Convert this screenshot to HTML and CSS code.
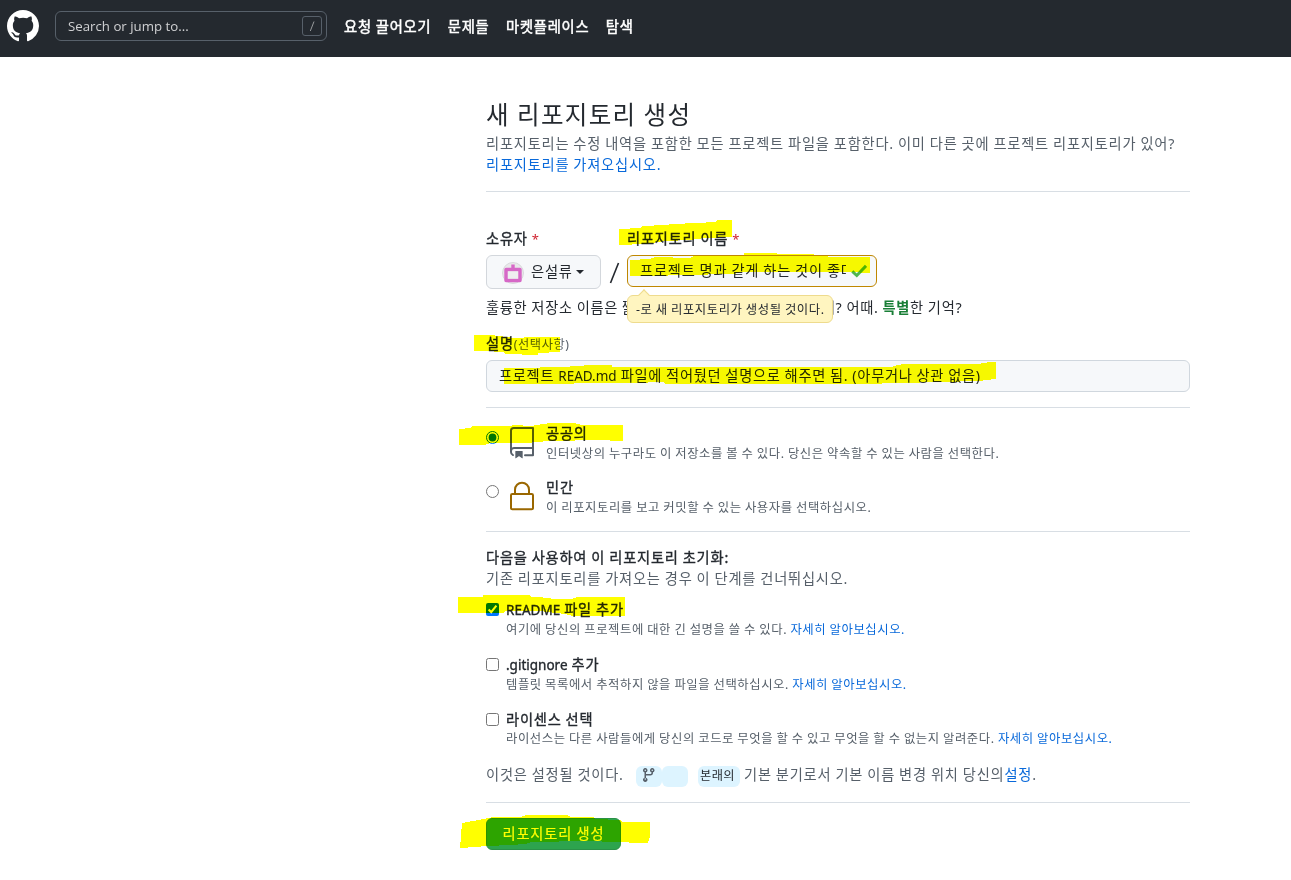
FILE: index.html
```html
<!DOCTYPE html>
<html lang="ko">
<head>
<meta charset="utf-8">
<title>새 리포지토리 생성</title>
<link rel="stylesheet" href="styles.css">
</head>
<body>
<header class="header">
  <svg class="logo" width="32" height="32" viewBox="0 0 16 16" fill="#fff"><path fill-rule="evenodd" d="M8 0C3.58 0 0 3.58 0 8c0 3.54 2.29 6.53 5.47 7.59.4.07.55-.17.55-.38 0-.19-.01-.82-.01-1.49-2.01.37-2.53-.49-2.69-.94-.09-.23-.48-.94-.82-1.13-.28-.15-.68-.52-.01-.53.63-.01 1.08.58 1.23.82.72 1.21 1.87.87 2.33.66.07-.52.28-.87.51-1.07-1.78-.2-3.64-.89-3.64-3.95 0-.87.31-1.59.82-2.15-.08-.2-.36-1.02.08-2.12 0 0 .67-.21 2.2.82.64-.18 1.32-.27 2-.27.68 0 1.36.09 2 .27 1.53-1.04 2.2-.82 2.2-.82.44 1.1.16 1.92.08 2.12.51.56.82 1.27.82 2.15 0 3.07-1.87 3.75-3.65 3.95.29.25.54.73.54 1.48 0 1.07-.01 1.93-.01 2.2 0 .21.15.46.55.38A8.013 8.013 0 0016 8c0-4.42-3.58-8-8-8z"/></svg>
  <div class="search"><span>Search or jump to...</span><kbd class="slash-key"><svg width="18" height="18" viewBox="0 0 18 18"><path d="M11 4.5 7.3 14" stroke="#979a9c" fill="none"/></svg></kbd></div>
  <nav class="nav"><a>요청 끌어오기</a><a>문제들</a><a>마켓플레이스</a><a>탐색</a></nav>
</header>

<main class="page">
  <section class="intro">
    <h1 class="title">새 리포지토리 생성</h1>
    <p class="lead">리포지토리는 수정 내역을 포함한 모든 프로젝트 파일을 포함한다. 이미 다른 곳에 프로젝트 리포지토리가 있어?<br><a class="link">리포지토리를 가져오십시오.</a></p>
  </section>

  <section class="names">
    <div class="name-row">
      <div class="field owner">
        <div class="label">소유자 <span class="required">*</span></div>
        <div class="owner-select">
          <svg class="avatar" width="22" height="22" viewBox="0 0 22 22"><circle cx="11" cy="11" r="10.5" fill="#e9e8ea" stroke="#d8d9dc"/><path d="M11 2.500v5M4 7.500h14v11H4z" fill="none" stroke="#d668c7" stroke-width="3.400" stroke-linejoin="round"/><path d="M6 9.500h10v7H6z" fill="#eeeeef"/></svg>
          <span>은설류</span><i class="caret"></i>
        </div>
      </div>
      <svg class="divider" width="26" height="32" viewBox="0 0 26 32"><path d="M17.500 8 9.500 28" stroke="#24292f" stroke-width="1.600"/></svg>
      <div class="field repo">
        <div class="label">리포지토리 이름 <span class="required">*</span></div>
        <div class="repo-input"><span class="value">프로젝트 명과 같게 하는 것이 좋다</span>
          <svg class="check" width="16" height="14" viewBox="0 0 16 14"><path d="M1.300 7.300 5.800 11.500 15 1.800" fill="none" stroke="#4fb54e" stroke-width="3"/></svg>
        </div>
        <div class="tip">-로 새 리포지토리가 생성될 것이다.</div>
      </div>
    </div>
    <p class="hint">훌륭한 저장소 이름은 짧고 기억에 남는다. 영감이 필요해? 어때. <b class="suggestion">특별</b>한 기억?</p>
    <div class="label desc-label">설명<span class="optional">(선택사항)</span></div>
    <div class="desc-input">프로젝트 <span class="latin">READ.md</span> 파일에 적어뒀던 설명으로 해주면 됨. (아무거나 상관 없음)</div>
  </section>

  <section class="visibility">
    <label class="choice">
      <input class="control radio" type="radio" name="visibility" checked>
      <svg class="choice-icon" width="32" height="32" viewBox="0 0 24 24" fill="#57606a"><path fill-rule="evenodd" d="M3 2.750A2.750 2.750 0 015.750 0h14.500a.75.75 0 01.75.75v20.500a.75.75 0 01-.75.75h-6a.75.75 0 010-1.500h5.250v-4H6A1.500 1.500 0 004.500 18v.75c0 .716.430 1.334 1.050 1.605a.75.75 0 01-.6 1.374A3.250 3.250 0 013 18.750v-16zM19.500 1.500V15H6c-.546 0-1.059.146-1.500.401V2.750c0-.690.560-1.250 1.250-1.250H19.500z"/><path d="M7 18.250a.25.25 0 01.25-.25h5a.25.25 0 01.25.25v5.010a.25.25 0 01-.397.201l-2.206-1.604a.25.25 0 00-.294 0L7.397 23.460a.25.25 0 01-.397-.200v-5.010z"/></svg>
      <div><div class="label">공공의</div><p class="note">인터넷상의 누구라도 이 저장소를 볼 수 있다. 당신은 약속할 수 있는 사람을 선택한다.</p></div>
    </label>
    <label class="choice">
      <input class="control radio" type="radio" name="visibility">
      <svg class="choice-icon" width="32" height="32" viewBox="0 0 24 24" fill="none" stroke="#9a6700" stroke-width="1.500"><rect x="3.750" y="9.750" width="16.500" height="11.500" rx="1"/><path d="M6.750 9.750V6.500a5.250 5.250 0 0110.500 0v3.250"/></svg>
      <div><div class="label">민간</div><p class="note">이 리포지토리를 보고 커밋할 수 있는 사용자를 선택하십시오.</p></div>
    </label>
  </section>

  <section class="init">
    <div class="label">다음을 사용하여 이 리포지토리 초기화:</div>
    <p class="muted">기존 리포지토리를 가져오는 경우 이 단계를 건너뛰십시오.</p>
    <label class="option"><input class="control" type="checkbox" checked>
      <div><div class="label"><span class="latin">README</span> 파일 추가</div><p class="note">여기에 당신의 프로젝트에 대한 긴 설명을 쓸 수 있다. <a class="link">자세히 알아보십시오.</a></p></div></label>
    <label class="option"><input class="control" type="checkbox">
      <div><div class="label"><span class="latin">.gitignore</span> 추가</div><p class="note">템플릿 목록에서 추적하지 않을 파일을 선택하십시오. <a class="link">자세히 알아보십시오.</a></p></div></label>
    <label class="option"><input class="control" type="checkbox">
      <div><div class="label">라이센스 선택</div><p class="note">라이선스는 다른 사람들에게 당신의 코드로 무엇을 할 수 있고 무엇을 할 수 없는지 알려준다. <a class="link">자세히 알아보십시오.</a></p></div></label>
    <div class="branch-row">
      <span class="branch-lead">이것은 설정될 것이다.</span>
      <span class="chip"><svg width="16" height="16" viewBox="0 0 16 16" fill="#57606a"><path fill-rule="evenodd" d="M5 3.250a.75.75 0 11-1.500 0 .75.75 0 011.500 0zm0 2.122a2.250 2.250 0 10-1.500 0v5.256a2.250 2.250 0 101.500 0V8.500h4.250A2.750 2.750 0 0012 5.750v-.378a2.250 2.250 0 10-1.500 0v.378c0 .69-.56 1.250-1.250 1.250H5V5.372zm-.75 7.378a.75.75 0 100-1.500.75.75 0 000 1.500zm7.750-9.500a.75.75 0 11-1.500 0 .75.75 0 011.500 0z"/></svg></span>
      <span class="chip blank"></span>
      <span class="chip branch">본래의</span>
      <span>기본 분기로서 기본 이름 변경 위치 당신의<a class="link">설정</a>.</span>
    </div>
  </section>

  <button class="submit">리포지토리 생성</button>
</main>

<svg class="marker" width="1291" height="880" viewBox="0 0 1291 880" fill="#ff0" shape-rendering="crispEdges">
  <path d="M619 229 640 228 643 226 665 225 672 224 697 223 715 222 717 220H732V237L705 238 690 240 665 241 645 244 619 245z"/>
  <path d="M630 260 650 259 655 257 690 258 694 256 744 255V253H777V254H813L815 256 840 257H870V273L850 272H740L735 274 680 275 655 276H630z"/>
  <path d="M474 335H493L497 336 508 337 513 338 535 337H560V352L538 353V355L505 354 503 352 485 351H474z"/>
  <path d="M504 368H520L560 367 580 366 587 365H612V367H892L897 365 905 364H970L980 364 982 363 992 362H996V379L985 380 980 381 900 383 863 384H665L664 382H650L645 383 504 384z"/>
  <path d="M459 429 470 428 473 426 511 426 513 425 533 426 534 425 545 424 548 423H575L577 424 582 425H623V441L597 440 553 441 533 442 530 443 490 443 485 445H459z"/>
  <path d="M458 597H483V595H530L531 597H542L544 598 557 599H573V598L578 597H625V616H573L565 614 540 611H505L503 613H458z"/>
  <path d="M460 848 462 823 473 821 483 819 493 817H520L526 815H567L571 817H593L595 819 620 820 623 822H650V837L648 843H635L623 842H603L600 841H567L550 842H532L525 844 510 845 487 846 475 847z"/>
</svg>
</body>
</html>
```
FILE: styles.css
```css
* { box-sizing: border-box; }

body {
  margin: 0;
  height: 880px;
  position: relative;
  overflow: hidden;
  background: #fff;
  color: #24292f;
  font-family: "Noto Sans", "Noto Sans CJK KR", sans-serif;
  font-size: 14.25px;
  line-height: 21px;
  letter-spacing: 0.77px;
  word-spacing: -0.4px;
  white-space: nowrap;
}

h1, p { margin: 0; font-weight: 400; }

.header {
  height: 57px;
  padding: 10px 7px;
  display: flex;
  align-items: flex-start;
  background: #24292f;
  color: #fff;
}

.search {
  width: 272px;
  height: 30px;
  margin: 1px 17px 0 16px;
  padding: 0 4px 0 12px;
  display: flex;
  align-items: center;
  justify-content: space-between;
  border: 1px solid #57606a;
  border-radius: 6px;
  color: #d0d1d3;
  font-family: "Open Sans", "Noto Sans", sans-serif;
  font-size: 13.25px;
  letter-spacing: 0;
  word-spacing: 0;
}

.slash-key {
  width: 20px;
  height: 20px;
  display: flex;
  border: 1px solid #57606a;
  border-radius: 3px;
}

.nav {
  display: flex;
  gap: 16.5px;
  padding-top: 6px;
  -webkit-text-stroke: 0.5px currentColor;
}

.page {
  width: 704px;
  margin-left: 486px;
  padding-top: 40px;
}

.intro { height: 95px; border-bottom: 1px solid #d8dee4; }

.title {
  font-size: 24.5px;
  line-height: 36px;
  letter-spacing: 1.3px;
}

.lead, .muted { color: #57606a; }
.link { color: #0969da; }
.label { -webkit-text-stroke: 0.35px currentColor; }
.latin { font-size: 13.5px; letter-spacing: 0; }

.names {
  height: 216px;
  padding-top: 36px;
  border-bottom: 1px solid #d8dee4;
}

.name-row { display: flex; height: 62px; }
.field .label { height: 27px; }
.required { color: #cf222e; font-size: 13px; -webkit-text-stroke: 0; }
.divider { margin-top: 27px; }

.owner-select {
  width: 115px;
  height: 34px;
  padding: 0 0 1px 15px;
  display: flex;
  align-items: center;
  border: 1px solid #d3d7dc;
  border-radius: 6px;
  background: #f6f8fa;
}

.avatar { margin: 2px 7px 0 0; }

.caret {
  margin: 1px 0 0 3px;
  border: 4px solid transparent;
  border-top-color: #24292f;
  border-bottom: 0;
}

.repo { position: relative; }

.repo-input {
  width: 250px;
  height: 32px;
  padding: 0 9px 2px 12px;
  display: flex;
  align-items: center;
  justify-content: space-between;
  border: 1px solid #bf8700;
  border-radius: 6px;
  background: #f6f8fa;
}

.value { width: 206px; overflow: hidden; }
.check { margin-top: 2px; }

.tip {
  position: absolute;
  left: 0;
  top: 67px;
  width: 206px;
  height: 28px;
  padding-left: 8px;
  border: 1px solid #eedb8d;
  border-radius: 6px;
  background: #fff5c0;
  font-size: 12.35px;
  letter-spacing: 0.55px;
  line-height: 27px;
}

.tip::before {
  content: "";
  position: absolute;
  left: 12px;
  top: -5px;
  width: 7px;
  height: 7px;
  border: solid #eedb8d;
  border-width: 1px 0 0 1px;
  background: #fff5c0;
  transform: rotate(45deg);
}

.hint { margin-top: 7px; letter-spacing: 0.68px; }
.suggestion { color: #1a7f37; font-weight: 600; }
.desc-label { margin: 15px 0 5px; }
.optional { color: #57606a; font-size: 12.2px; letter-spacing: 0.6px; -webkit-text-stroke: 0; }

.desc-input {
  height: 32px;
  padding-left: 12px;
  border: 1px solid #d0d7de;
  border-radius: 6px;
  background: #f6f8fa;
  line-height: 29px;
  letter-spacing: 0.7px;
}

.visibility {
  height: 124px;
  padding-top: 15px;
  border-bottom: 1px solid #d8dee4;
}

.choice { display: flex; height: 54px; }
.control { width: 13px; height: 13px; margin: 0; }
.radio { margin-top: 8px; }
.choice-icon { margin: 4px 8px 0 7px; }

.note {
  color: #57606a;
  font-size: 12.35px;
  letter-spacing: 0.56px;
  line-height: 19px;
}

.init {
  height: 271px;
  padding-top: 15px;
  border-bottom: 1px solid #d8dee4;
}

.option {
  display: flex;
  gap: 7px;
  height: 55px;
}

.option .control { margin-top: 14px; }
.option > div { padding-top: 10px; }
.option .note { line-height: 18px; }

.branch-row {
  display: flex;
  margin-top: 10px;
  color: #57606a;
}

.branch-lead { width: 150px; }

.chip {
  width: 26px;
  height: 21px;
  margin-top: 2px;
  display: flex;
  justify-content: center;
  border-radius: 6px;
  background: #ddf4ff;
  font-size: 12.2px;
  line-height: 19px;
  letter-spacing: 0.4px;
}

.chip svg { margin-top: 1px; }
.blank { margin-right: 10px; }
.branch { width: 42px; margin-right: 4px; padding-right: 3px; color: #24292f; }

.submit {
  display: block;
  width: 135px;
  height: 32px;
  margin-top: 15px;
  padding: 0 0 1px;
  border: 1px solid #2a9147;
  border-radius: 6px;
  background: #2da44e;
  color: #fff;
  font: 400 14.25px/28px "Noto Sans", "Noto Sans CJK KR", sans-serif;
  letter-spacing: 0.8px;
  -webkit-text-stroke: 0.2px currentColor;
}

/* Highlighter strokes drawn over the form */
.marker {
  position: absolute;
  left: 0;
  top: 0;
  mix-blend-mode: multiply;
  pointer-events: none;
}
```
